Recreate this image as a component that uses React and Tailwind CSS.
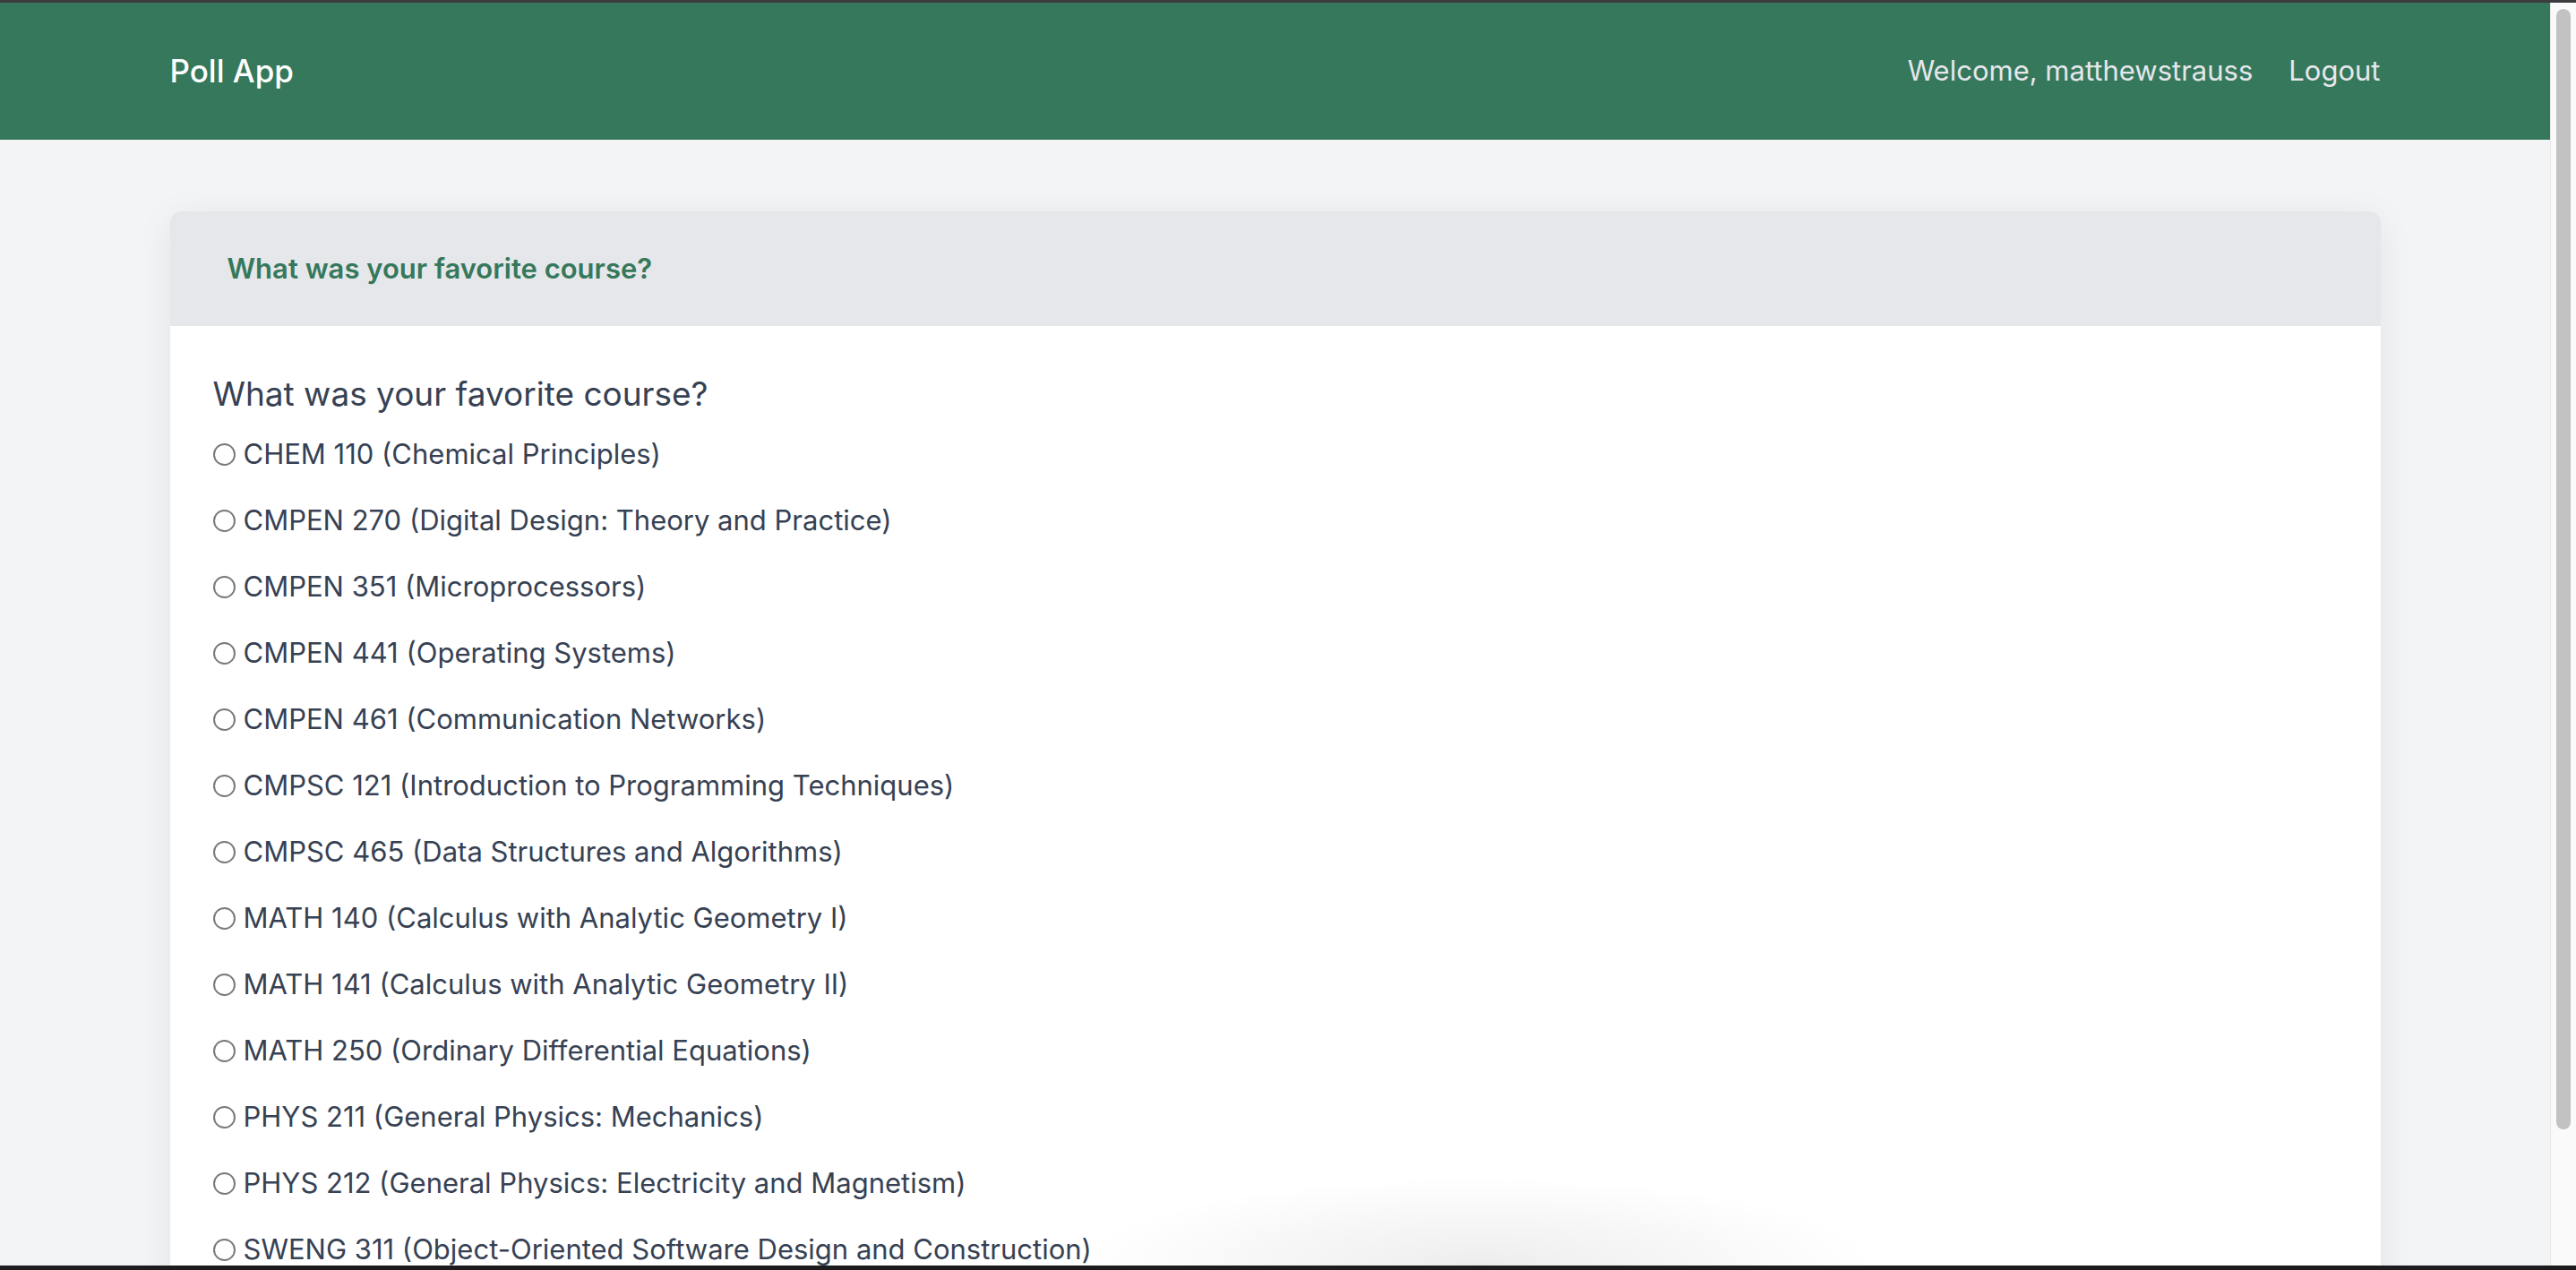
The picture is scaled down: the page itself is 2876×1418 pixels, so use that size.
import React, { useState } from 'react';

const courses = [
    'CHEM 110 (Chemical Principles)',
    'CMPEN 270 (Digital Design: Theory and Practice)',
    'CMPEN 351 (Microprocessors)',
    'CMPEN 441 (Operating Systems)',
    'CMPEN 461 (Communication Networks)',
    'CMPSC 121 (Introduction to Programming Techniques)',
    'CMPSC 465 (Data Structures and Algorithms)',
    'MATH 140 (Calculus with Analytic Geometry I)',
    'MATH 141 (Calculus with Analytic Geometry II)',
    'MATH 250 (Ordinary Differential Equations)',
    'PHYS 211 (General Physics: Mechanics)',
    'PHYS 212 (General Physics: Electricity and Magnetism)',
    'SWENG 311 (Object-Oriented Software Design and Construction)',
];

const App = () => {
    const [choice, setChoice] = useState('');

    return (
        <div className="h-[1418px] w-full flex flex-col bg-[#1c1c1e] overflow-hidden font-['Inter',sans-serif]">
            <div className="h-[3px] bg-[#3c3c3e]"></div>

            <div className="flex-1 flex min-h-0">
                <div className="flex-1 relative overflow-hidden bg-gray-100">
                    {/* navbar */}
                    <nav className="h-[153px] bg-[#36785b]">
                        <div className="max-w-[2560px] mx-auto px-[46px] h-full flex items-center justify-between">
                            <span className="text-[35px] font-medium text-white">Poll App</span>
                            <div className="flex items-center gap-[40px] text-[31px] text-gray-200">
                                <span>Welcome, matthewstrauss</span>
                                <button className="hover:text-white">Logout</button>
                            </div>
                        </div>
                    </nav>

                    <main className="max-w-[2560px] mx-auto px-[46px] pt-[80px]">
                        <div className="bg-white rounded-t-[12px] shadow-[0_8px_40px_rgba(0,0,0,0.07)] overflow-hidden">
                            <div className="bg-gray-200 px-16 py-10">
                                <h2 className="text-[31px] leading-[48px] font-semibold text-[#36785b]">What was your favorite course?</h2>
                            </div>
                            <div className="px-12 pt-12 pb-12">
                                <h3 className="text-[37px] leading-[56px] text-gray-700">What was your favorite course?</h3>
                                <div className="mt-[15px] flex flex-col gap-[26px]">
                                    {courses.map((c) => (
                                        <label key={c} className="flex items-center h-[48px] text-[31px] text-gray-700 cursor-pointer">
                                            <input
                                                type="radio"
                                                name="course"
                                                value={c}
                                                checked={choice === c}
                                                onChange={() => setChoice(c)}
                                                className="appearance-none w-[25px] h-[25px] rounded-full border-2 border-[#7a7a7a] bg-white mr-[9px] checked:border-[8px] checked:border-blue-600"
                                            />
                                            <span>{c}</span>
                                        </label>
                                    ))}
                                </div>
                            </div>
                        </div>
                    </main>

                    {/* soft shadow along bottom edge */}
                    <div className="absolute bottom-0 left-[1200px] w-[900px] h-[100px] bg-[radial-gradient(ellipse_at_bottom,rgba(0,0,0,0.07),rgba(0,0,0,0)_70%)] pointer-events-none"></div>
                </div>

                {/* scrollbar */}
                <div className="w-[29px] bg-[#fafafa] border-l border-[#e6e6e6] pt-[7px] pl-[6px] pr-[6px]">
                    <div className="h-[1251px] rounded-full bg-[#c2c2c2]"></div>
                </div>
            </div>

            <div className="h-[5px] bg-[#1c1c1e]"></div>
        </div>
    );
};

export default App;
